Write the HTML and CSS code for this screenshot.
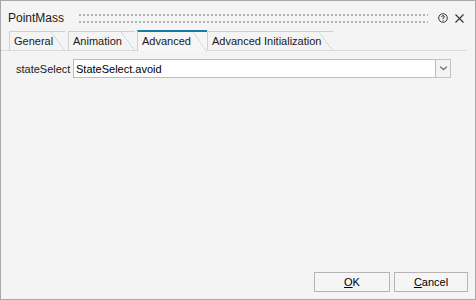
FILE: index.html
```html
<!DOCTYPE html>
<html lang="en">
<head>
    <meta charset="UTF-8">
    <title>PointMass</title>
    <link rel="stylesheet" href="styles.css">
</head>
<body>

<div class="dialog">
    <div class="title-bar">
        <span class="title">PointMass</span>
        <span class="grip"></span>
        <svg class="help-icon" width="10" height="10" viewBox="0 0 10 10">
            <circle cx="5" cy="5" r="4.3" fill="none" stroke="#333" stroke-width="1"/>
            <path d="M3.6 4 Q3.6 2.7 5 2.7 Q6.4 2.7 6.4 3.9 Q6.4 4.7 5 5.2 L5 6" fill="none" stroke="#333" stroke-width="1"/>
            <rect x="4.5" y="6.8" width="1" height="1" fill="#333"/>
        </svg>
        <svg class="close-icon" width="9" height="9" viewBox="0 0 9 9">
            <path d="M0.5 0.5 L8.5 8.5 M8.5 0.5 L0.5 8.5" stroke="#333" stroke-width="1.1"/>
        </svg>
    </div>

    <div class="tab-strip">
        <div class="tab tab-general">General</div>
        <div class="tab tab-animation">Animation</div>
        <div class="tab tab-advanced active">Advanced</div>
        <div class="tab tab-init">Advanced Initialization</div>
    </div>

    <div class="tab-content">
        <div class="field-row">
            <label for="state-select">stateSelect</label>
            <div class="combo">
                <input type="text" id="state-select" value="StateSelect.avoid">
                <div class="combo-btn">
                    <svg width="7" height="5" viewBox="0 0 7 5">
                        <path d="M0 0 L3.5 2.5 L7 0 L7 1.5 L3.5 4.5 L0 1.5 Z" fill="#777"/>
                    </svg>
                </div>
            </div>
        </div>
    </div>

    <div class="footer">
        <button class="dlg-btn"><u>O</u>K</button>
        <button class="dlg-btn"><u>C</u>ancel</button>
    </div>
</div>

</body>
</html>
```

FILE: styles.css
```css
body {
    margin: 0;
    font-family: "Liberation Sans", Arial, sans-serif;
    font-size: 11px;
    color: #000;
    background: #fff;
}

.dialog {
    width: 476px;
    height: 300px;
    box-sizing: border-box;
    border: 1px solid #a8a8a8;
    background: #f4f4f4;
    display: flex;
    flex-direction: column;
}

.title-bar {
    height: 30px;
    display: flex;
    align-items: center;
    padding: 0 11px 0 7px;
}

.title {
    font-size: 12px;
    color: #1a1a1a;
    margin-top: 4px;
}

.grip {
    flex: 1;
    height: 9px;
    margin: 4px 10px 0 15px;
    background-image:
        linear-gradient(90deg, transparent 2px, #f4f4f4 2px),
        linear-gradient(#b2b2b2 2px, transparent 2px);
    background-size: 4px 7px;
}

.help-icon {
    margin-top: 4px;
}

.close-icon {
    margin: 4px 0 0 7px;
}

.tab-strip {
    display: flex;
    height: 19px;
    padding-left: 8px;
    border-bottom: 1px solid #dadada;
    margin-right: 8px;
}

.tab {
    position: relative;
    box-sizing: border-box;
    height: 19px;
    line-height: 19px;
    border-top: 1px solid #cfcfcf;
    border-left: 1px solid #cfcfcf;
    padding-left: 4px;
    color: #1a1a1a;
    white-space: nowrap;
}

.tab::after {
    content: "";
    position: absolute;
    top: 0;
    right: 0;
    width: 14px;
    height: 19px;
    background: linear-gradient(to top right, transparent calc(50% - 0.6px), #cfcfcf 50%, transparent calc(50% + 0.6px));
}

.tab-general {
    width: 56px;
    margin-right: 3px;
}

.tab-animation {
    width: 67px;
    margin-right: 2px;
}

.tab-advanced {
    width: 70px;
}

.tab-init {
    width: 126px;
}

.tab.active {
    border-top: 2px solid #1a7aa6;
    height: 21px;
    margin-top: -1px;
    line-height: 19px;
    background: #f6f6f6;
}

.tab.active::after {
    height: 20px;
}

.tab-content {
    padding: 8px 24px 0 15px;
}

.field-row {
    display: flex;
    align-items: center;
}

.field-row label {
    width: 57px;
    color: #1a1a1a;
    white-space: nowrap;
}

.combo {
    flex: 1;
    display: flex;
    height: 19px;
}

.combo input {
    flex: 1;
    box-sizing: border-box;
    height: 19px;
    border: 1px solid #bdbdbd;
    padding: 0 2px;
    font-family: inherit;
    font-size: 11px;
    color: #000;
    outline: none;
}

.combo-btn {
    width: 15px;
    box-sizing: border-box;
    border: 1px solid #c4c4c4;
    border-left: none;
    display: flex;
    justify-content: center;
    align-items: center;
    background: #f4f4f4;
}

.footer {
    margin-top: auto;
    display: flex;
    justify-content: flex-end;
    gap: 4px;
    padding: 0 7px 7px 0;
}

.dlg-btn {
    width: 76px;
    height: 20px;
    border: 1px solid #b5b5b5;
    background: #f5f5f5;
    font-family: inherit;
    font-size: 11px;
    color: #000;
    padding: 0;
}

.dlg-btn + .dlg-btn {
    width: 74px;
}
```
